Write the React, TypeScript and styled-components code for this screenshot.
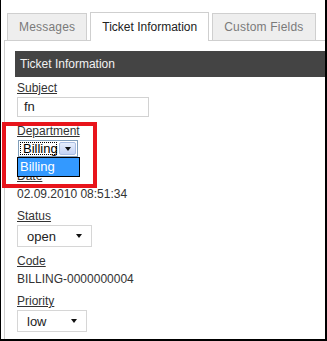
import React from 'react';
import styled, { createGlobalStyle } from 'styled-components';

const GlobalStyle = createGlobalStyle`
  html, body {
    margin: 0;
    padding: 0;
    background: #fff;
  }
  body {
    font-family: "Liberation Sans", Arial, sans-serif;
    font-size: 12px;
    color: #333;
  }
`;

const tabs = ['Messages', 'Ticket Information', 'Custom Fields'];

const App: React.FC = () => {
  return (
    <>
      <GlobalStyle />
      <Frame>
        <TabBar>
          {tabs.map((name) => (
            <Tab key={name} active={name === 'Ticket Information'}>
              {name}
            </Tab>
          ))}
        </TabBar>
        <Panel>
          <SectionHeader>Ticket Information</SectionHeader>
          <Fields>
            <Field>
              <Label>Subject</Label>
              <TextInput>fn</TextInput>
            </Field>
            <Field>
              <Label>Department</Label>
              <ComboHolder>
                <Combo>
                  <ComboFocus>Billing</ComboFocus>
                  <ComboButton>
                    <Arrow />
                  </ComboButton>
                </Combo>
                <ComboList>Billing</ComboList>
              </ComboHolder>
            </Field>
            <Field>
              <Label>Date</Label>
              <Value>02.09.2010 08:51:34</Value>
            </Field>
            <Field>
              <Label>Status</Label>
              <Select width={75}>
                open
                <Arrow />
              </Select>
            </Field>
            <Field>
              <Label>Code</Label>
              <Value>BILLING-0000000004</Value>
            </Field>
            <Field>
              <Label>Priority</Label>
              <Select width={70}>
                low
                <Arrow />
              </Select>
            </Field>
          </Fields>
        </Panel>
        <Highlight />
      </Frame>
    </>
  );
};

export default App;

const Frame = styled.div`
  position: relative;
  box-sizing: border-box;
  width: 327px;
  height: 341px;
  border-left: 1px solid #000;
  border-right: 2px solid #000;
  border-bottom: 2px solid #000;
  overflow: hidden;
  background: #fff;
`;

const TabBar = styled.div`
  display: flex;
  align-items: flex-end;
  gap: 3px;
  height: 40px;
  padding-left: 6px;
  box-sizing: border-box;
`;

const Tab = styled.div<{ active?: boolean }>`
  position: relative;
  z-index: 1;
  box-sizing: border-box;
  height: ${(p) => (p.active ? '29px' : '27px')};
  margin-bottom: ${(p) => (p.active ? '-1px' : '0')};
  padding: 0 11px ${(p) => (p.active ? '1px' : '0')};
  display: flex;
  align-items: center;
  border: 1px solid #cfcfcf;
  border-bottom: none;
  background: ${(p) => (p.active ? '#fff' : '#eeeeee')};
  color: ${(p) => (p.active ? '#222' : '#7a7a7a')};
  letter-spacing: ${(p) => (p.active ? '0' : '0.2px')};
  white-space: nowrap;
`;

const Panel = styled.div`
  margin-left: 3px;
  border-top: 1px solid #cfcfcf;
  border-left: 1px solid #cfcfcf;
  padding: 10px 0 0 10px;
  height: 300px;
`;

const SectionHeader = styled.div`
  height: 26px;
  line-height: 26px;
  padding-left: 5px;
  background: #444;
  color: #f2f2f2;
  margin-bottom: 4px;
  white-space: nowrap;
`;

const Fields = styled.div`
  display: flex;
  flex-direction: column;
  align-items: flex-start;
  gap: 7px;
  padding-left: 2px;
`;

const Field = styled.div`
  display: flex;
  flex-direction: column;
  align-items: flex-start;
`;

const Label = styled.span`
  display: block;
  height: 15px;
  line-height: 15px;
  margin-bottom: 1px;
  text-decoration: underline;
  color: #333;
`;

const Value = styled.div`
  height: 15px;
  line-height: 15px;
  margin-top: 2px;
  color: #333;
`;

const TextInput = styled.div`
  box-sizing: border-box;
  width: 132px;
  height: 20px;
  line-height: 18px;
  padding-left: 6px;
  border: 1px solid #d2d2d2;
  font-size: 13px;
  color: #222;
`;

const Select = styled.div<{ width: number }>`
  box-sizing: border-box;
  width: ${(p) => p.width}px;
  height: 22px;
  display: flex;
  align-items: center;
  justify-content: space-between;
  padding: 0 9px 0 9px;
  border: 1px solid #d6d6d6;
  background: #fff;
  font-size: 13px;
  color: #222;
`;

const Arrow = styled.span`
  width: 0;
  height: 0;
  border-left: 3.5px solid transparent;
  border-right: 3.5px solid transparent;
  border-top: 4px solid #111;
`;

const ComboHolder = styled.div`
  position: relative;
  height: 22px;
  width: 64px;
`;

const Combo = styled.div`
  box-sizing: border-box;
  margin-left: 1px;
  width: 60px;
  height: 17px;
  display: flex;
  align-items: center;
  gap: 2px;
  padding: 1px;
  border: 1px solid #7f9db9;
  background: #fff;
`;

const ComboFocus = styled.div`
  box-sizing: border-box;
  height: 13px;
  width: 37px;
  line-height: 11px;
  padding-left: 2px;
  border: 1px dotted #000;
  font-size: 13px;
  color: #000;
`;

const ComboButton = styled.div`
  box-sizing: border-box;
  width: 17px;
  height: 13px;
  display: flex;
  align-items: center;
  justify-content: center;
  border: 1px solid #a9bde2;
  border-radius: 2px;
  background: linear-gradient(#e6eefc, #c3d3f5);
`;

const ComboList = styled.div`
  position: absolute;
  left: 0;
  top: 17px;
  box-sizing: border-box;
  width: 63px;
  height: 20px;
  line-height: 18px;
  padding-left: 2px;
  border: 1px solid #000;
  background: #3399ff;
  color: #fff;
  font-size: 13px;
`;

const Highlight = styled.div`
  position: absolute;
  left: 1px;
  top: 122px;
  width: 95px;
  height: 66px;
  box-sizing: border-box;
  border: 4px solid #e8141b;
  pointer-events: none;
`;
